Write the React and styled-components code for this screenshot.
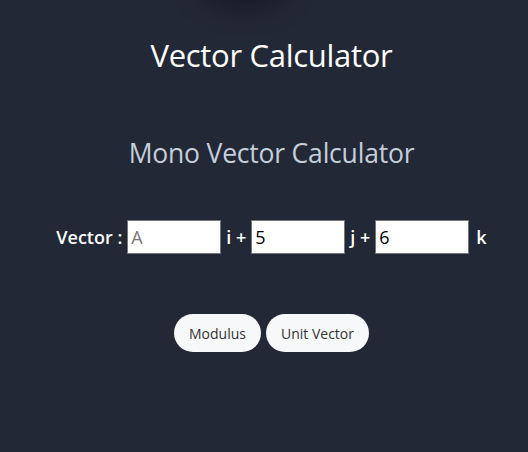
import React from "react";
import styled, { createGlobalStyle } from "styled-components";

const Global = createGlobalStyle`
  html, body { margin: 0; padding: 0; background: #232836; }
  body { font-family: "Open Sans", "Noto Sans", sans-serif; }
`;

const Page = styled.div`
  position: relative;
  min-height: 452px;
  background: #232836;
  display: flex;
  flex-direction: column;
  align-items: center;
  padding-left: 15px;
  box-sizing: border-box;
  overflow: hidden;
`;

const Glow = styled.div`
  position: absolute;
  left: 200px;
  top: -40px;
  width: 90px;
  height: 50px;
  border-radius: 50%;
  background: rgba(15, 18, 26, 0.6);
  filter: blur(12px);
`;

const Title = styled.h1`
  margin: 34px 0 0;
  font-size: 31px;
  font-weight: 500;
  color: #ffffff;
  letter-spacing: -0.3px;
`;

const Subtitle = styled.h2`
  margin: 59px 0 0;
  font-size: 26.5px;
  font-weight: 400;
  color: #c4cfdc;
  letter-spacing: -0.2px;
`;

const Row = styled.div`
  margin-top: 49px;
  display: flex;
  align-items: center;
  gap: 5px;
`;

const Label = styled.span`
  font-size: 18px;
  font-weight: 600;
  color: #ffffff;
  margin-left: ${(p) => p.$ml || 0}px;
`;

const Input = styled.input`
  width: 94px;
  height: 34px;
  box-sizing: border-box;
  border: 1px solid #767676;
  background: #fff;
  padding: 0 3px;
  font-size: 18px;
  font-family: "Open Sans", sans-serif;
  color: #000;
  outline: none;
  &::placeholder { color: #777; }
`;

const Buttons = styled.div`
  margin-top: 60px;
  display: flex;
  gap: 5px;
`;

const Pill = styled.button`
  height: 38px;
  padding: 0 15px;
  border: none;
  border-radius: 19px;
  background: #f7f8fa;
  color: #333;
  font-size: 14px;
  font-family: "Open Sans", sans-serif;
`;

export default function App() {
  return (
    <>
      <Global />
      <Page>
        <Glow />
        <Title>Vector Calculator</Title>
        <Subtitle>Mono Vector Calculator</Subtitle>
        <Row>
          <Label>Vector :</Label>
          <Input placeholder="A" />
          <Label>i +</Label>
          <Input defaultValue="5" />
          <Label>j +</Label>
          <Input defaultValue="6" />
          <Label $ml={2}>k</Label>
        </Row>
        <Buttons>
          <Pill>Modulus</Pill>
          <Pill>Unit Vector</Pill>
        </Buttons>
      </Page>
    </>
  );
}
